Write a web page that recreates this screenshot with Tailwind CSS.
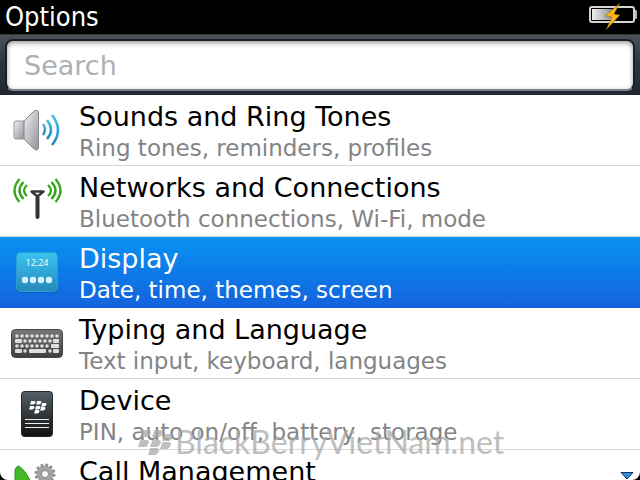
<!DOCTYPE html>
<html lang="en">
<head>
  <meta charset="UTF-8">
  <meta name="viewport" content="width=device-width, initial-scale=1">
  <title>Options</title>
  <script src="https://cdn.jsdelivr.net/npm/@tailwindcss/browser@4"></script>
</head>
<body class="bg-black font-['DejaVu_Sans',sans-serif]">
<div class="relative flex h-screen flex-col overflow-hidden">

  <!-- Title bar -->
  <header class="flex h-[34px] shrink-0 items-center justify-between bg-black pl-[5px] pr-[3px]">
    <h1 class="font-['DejaVu_Sans_Condensed','DejaVu_Sans',sans-serif] text-[27px] leading-8 text-white">Options</h1>
    <svg class="h-8 w-12" viewBox="0 0 48 32" role="img" aria-label="Battery charging">
      <defs>
        <linearGradient id="cell" x1="0" x2="1" y1="0" y2="0">
          <stop offset="0" stop-color="#eee"/><stop offset="1" stop-color="#8a8a8a"/>
        </linearGradient>
      </defs>
      <path d="M44 9h3q1 0 1 1v7q0 1-1 1h-3z" fill="#b5b5b5"/>
      <rect x="1" y="6" width="44" height="15" rx="2" fill="#000" stroke="#d4d4d4" stroke-width="2"/>
      <rect x="3" y="8" width="22" height="11" fill="url(#cell)"/>
      <path d="M31 2L16 15l7 1-6 13 14-15-6-1z" fill="#fbb415" stroke="#6b4a06" stroke-width=".4"/>
    </svg>
  </header>

  <!-- Search -->
  <div class="h-[61px] shrink-0 border-t border-[#30363c] bg-linear-to-b from-[#4b5259] via-[#2b333c] to-[#202731] px-[5px] pt-[4px]">
    <input type="search" aria-label="Search" placeholder="Search" class="h-[52px] w-full rounded-lg border-2 border-[#1b2027] border-b-[#79818a] bg-white px-[17px] text-[27px] text-black shadow-[inset_0_2px_5px_#999] outline-none placeholder:text-[#adb0b3]">
  </div>

  <!-- Option list -->
  <main class="min-h-0 flex-1 overflow-hidden rounded-b-lg bg-white">
    <ul>
      <li class="border-b border-[#d8d8d8]">
        <a href="#sounds" class="flex h-[70px] items-center">
          <svg class="h-[70px] w-[79px] shrink-0" viewBox="0 0 79 70" aria-hidden="true">
            <defs>
              <linearGradient id="metal" x1="0" x2="1" y1="0" y2="1">
                <stop offset="0" stop-color="#f0f0f2"/><stop offset="1" stop-color="#929298"/>
              </linearGradient>
              <linearGradient id="wave" x1="0" x2="0" y1="0" y2="1">
                <stop offset="0" stop-color="#4dbfe6"/><stop offset="1" stop-color="#1c87bd"/>
              </linearGradient>
            </defs>
            <path d="M16 26h8v18h-8q-2 0-2-2V28q0-2 2-2z" fill="url(#metal)" stroke="#98989d"/>
            <path d="M24 26l9-9q2-2 4-1.500q1.500.500 1.500 2.500v34q0 3-2 3-1.500 0-3-1.500L24 44z" fill="url(#metal)" stroke="#88888d"/>
            <g fill="none" stroke="url(#wave)" stroke-width="2.500">
              <path d="M43 29q4 5 0 11"/><path d="M47 25q8 10 0 19"/><path d="M52 20q12 15 0 30"/>
            </g>
          </svg>
          <span class="flex flex-col pt-1">
            <span class="text-[27px] leading-8 text-black">Sounds and Ring Tones</span>
            <span class="text-[23px] leading-[30px] text-[#838486]">Ring tones, reminders, profiles</span>
          </span>
        </a>
      </li>
      <li class="border-b border-[#d8d8d8]">
        <a href="#networks" class="flex h-[70px] items-center">
          <svg class="h-[70px] w-[79px] shrink-0" viewBox="0 0 79 70" aria-hidden="true">
            <path d="M31.500 25.500h12l-6 5z" fill="#fff" stroke="#39393b" stroke-width="2.500" stroke-linejoin="round"/>
            <path d="M37.500 32v19" stroke="#333436" stroke-width="4" stroke-linecap="round"/>
            <g fill="none" stroke="#36a51b" stroke-width="2.300">
              <path d="M27 19q-6 5.500 0 11"/><path d="M23.500 16q-8 8.500 0 17"/><path d="M19.500 13q-10 11.500 0 23"/>
              <path d="M48 19q6 5.500 0 11"/><path d="M51.500 16q8 8.500 0 17"/><path d="M55.500 13q10 11.500 0 23"/>
            </g>
          </svg>
          <span class="flex flex-col pt-1">
            <span class="text-[27px] leading-8 text-black">Networks and Connections</span>
            <span class="text-[23px] leading-[30px] text-[#838486]">Bluetooth connections, Wi-Fi, mode</span>
          </span>
        </a>
      </li>
      <li class="border-b border-[#0f5fd0] bg-linear-to-b from-[#0892f2] to-[#1463dc]">
        <a href="#display" aria-current="true" class="flex h-[70px] items-center">
          <svg class="h-[70px] w-[79px] shrink-0" viewBox="0 0 79 70" aria-hidden="true">
            <defs>
              <linearGradient id="tile" x1="0" x2="0" y1="0" y2="1">
                <stop offset="0" stop-color="#39c3f1"/><stop offset="1" stop-color="#2489bb"/>
              </linearGradient>
            </defs>
            <rect x="16" y="16" width="42" height="40" rx="4" fill="#0b4da8" opacity=".5"/>
            <rect x="16.500" y="15.500" width="41" height="39" rx="4" fill="url(#tile)" stroke="#2c9fd0"/>
            <text x="37" y="29" text-anchor="middle" font-family="Open Sans" font-size="9" fill="#fff">12:24</text>
            <g fill="#d9f1fd">
              <circle cx="25" cy="43" r="3.200"/><circle cx="33" cy="43" r="3.200"/><circle cx="41" cy="43" r="3.200"/><circle cx="49" cy="43" r="3.200"/>
            </g>
          </svg>
          <span class="flex flex-col pt-1">
            <span class="text-[27px] leading-8 text-white">Display</span>
            <span class="text-[23px] leading-[30px] text-white">Date, time, themes, screen</span>
          </span>
        </a>
      </li>
      <li class="border-b border-[#d8d8d8]">
        <a href="#typing" class="flex h-[70px] items-center">
          <svg class="h-[70px] w-[79px] shrink-0" viewBox="0 0 79 70" aria-hidden="true">
            <defs>
              <linearGradient id="board" x1="0" x2="0" y1="0" y2="1">
                <stop offset="0" stop-color="#767779"/><stop offset="1" stop-color="#3d3e40"/>
              </linearGradient>
            </defs>
            <rect x="11.500" y="21.500" width="51" height="28" rx="4" fill="url(#board)" stroke="#444547"/>
            <g fill="none" stroke="#dedede" stroke-width="3.600" stroke-linecap="round">
              <path d="M17 28h41" stroke-dasharray="0 5"/>
              <path d="M25 33h26" stroke-dasharray="0 5"/>
              <path d="M17 38h32" stroke-dasharray="0 5"/>
              <path d="M25 43h.01M50 43h.01"/>
            </g>
            <g fill="#dedede">
              <rect x="15" y="31" width="7" height="4" rx="1"/><rect x="53" y="31" width="6" height="4" rx="1"/>
              <rect x="51" y="36" width="8" height="4" rx="1"/>
              <rect x="15" y="41" width="7" height="4" rx="1"/><rect x="29" y="41" width="17" height="4" rx="1"/><rect x="53" y="41" width="6" height="4" rx="1"/>
            </g>
          </svg>
          <span class="flex flex-col pt-1">
            <span class="text-[27px] leading-8 text-black">Typing and Language</span>
            <span class="text-[23px] leading-[30px] text-[#838486]">Text input, keyboard, languages</span>
          </span>
        </a>
      </li>
      <li class="border-b border-[#d8d8d8]">
        <a href="#device" class="flex h-[70px] items-center">
          <svg class="h-[70px] w-[79px] shrink-0" viewBox="0 0 79 70" aria-hidden="true">
            <defs>
              <linearGradient id="phone" x1="0" x2="0" y1="0" y2="1">
                <stop offset="0" stop-color="#536066"/><stop offset=".6" stop-color="#2c3033"/><stop offset="1" stop-color="#111"/>
              </linearGradient>
              <g id="berry">
                <path id="seed" d="M1.200 0h3q1.600 0 1.200 1.500T3.500 3.500H0z"/>
                <use href="#seed" x="6"/>
                <use href="#seed" x="-1" y="5"/><use href="#seed" x="5" y="5"/>
                <use href="#seed" x="11" y="2"/><use href="#seed" x="10" y="6"/>
                <use href="#seed" x="4" y="9"/>
              </g>
            </defs>
            <rect x="21.500" y="12.500" width="31" height="45" rx="3" fill="url(#phone)" stroke="#26292b"/>
            <use href="#berry" x="30" y="22" fill="#fff"/>
            <path d="M25 40.500h24M25 44.500h24M25 48.500h24" stroke="#eee"/>
          </svg>
          <span class="flex flex-col pt-1">
            <span class="text-[27px] leading-8 text-black">Device</span>
            <span class="text-[23px] leading-[30px] text-[#838486]">PIN, auto on/off, battery, storage</span>
          </span>
        </a>
      </li>
      <li>
        <a href="#calls" class="flex h-[70px] items-start">
          <svg class="h-[70px] w-[79px] shrink-0" viewBox="0 0 79 70" aria-hidden="true">
            <path d="M15 32V20q1-4 4-4 6 4 11 14v2z" fill="#43b928" stroke="#2e9518"/>
            <circle cx="45" cy="24" r="8.500" fill="#a2a3a5"/>
            <circle cx="45" cy="24" r="9" fill="none" stroke="#8f9092" stroke-width="3" stroke-dasharray="2.700 2.012"/>
            <circle cx="45" cy="24" r="3.500" fill="#fff" stroke="#858688"/>
          </svg>
          <span class="pt-[6px] text-[27px] leading-8 text-black">Call Management</span>
        </a>
      </li>
    </ul>
  </main>

  <!-- More items below -->
  <svg class="absolute bottom-0 right-[6px] h-2 w-[14px]" viewBox="0 0 14 8" aria-hidden="true">
    <path d="M1 .5h12L7 7z" fill="#2e8fe8" stroke="#143052"/>
  </svg>

  <!-- Watermark -->
  <div class="pointer-events-none absolute bottom-[18px] left-[136px] flex items-center gap-[3px] text-[#a9a9a9]/75">
    <svg class="h-[26px] w-9" viewBox="-1.500 -.5 17 13" fill="currentColor" aria-hidden="true"><use href="#berry"/></svg>
    <span class="font-['Lato',sans-serif] text-[32px] leading-10">BlackBerryVietNam.net</span>
  </div>
</div>
</body>
</html>
